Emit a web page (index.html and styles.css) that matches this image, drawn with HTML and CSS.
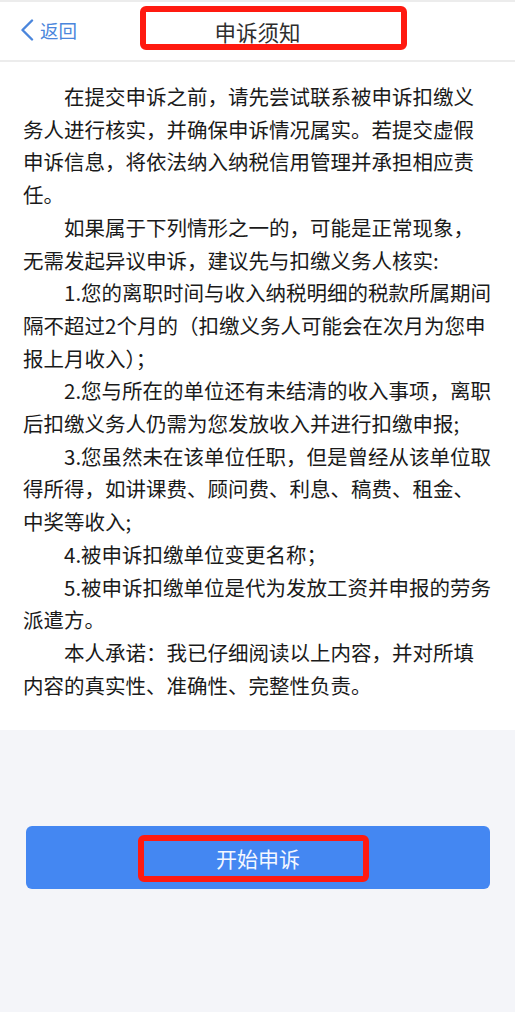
FILE: index.html
```html
<!DOCTYPE html>
<html lang="zh-CN">
<head>
<meta charset="utf-8">
<title>申诉须知</title>
<link rel="stylesheet" href="styles.css">
</head>
<body>
<div class="page">
  <header class="topbar">
    <a class="back">
      <svg class="chev" width="14" height="22" viewBox="0 0 14 22"><polyline points="12,1.5 2.5,11 12,20.5" fill="none" stroke="#4b86dc" stroke-width="2.4" stroke-linecap="round" stroke-linejoin="round"/></svg>
      <span>返回</span>
    </a>
    <h1 class="title">申诉须知</h1>
    <span class="mark mark-title"></span>
  </header>
  <main class="notice">
    <p class="para">在提交申诉之前，请先尝试联系被申诉扣缴义务人进行核实，并确保申诉情况属实。若提交虚假申诉信息，将依法纳入纳税信用管理并承担相应责任。</p>
    <p class="para">如果属于下列情形之一的，可能是正常现象，<br>无需发起异议申诉，建议先与扣缴义务人核实:</p>
    <p class="para">1.您的离职时间与收入纳税明细的税款所属期间隔不超过2个月的（扣缴义务人可能会在次月为您申报上月收入）；</p>
    <p class="para">2.您与所在的单位还有未结清的收入事项，离职后扣缴义务人仍需为您发放收入并进行扣缴申报;</p>
    <p class="para">3.您虽然未在该单位任职，但是曾经从该单位取得所得，如讲课费、顾问费、利息、稿费、租金、中奖等收入;</p>
    <p class="para">4.被申诉扣缴单位变更名称；</p>
    <p class="para">5.被申诉扣缴单位是代为发放工资并申报的劳务派遣方。</p>
    <p class="para">本人承诺：我已仔细阅读以上内容，并对所填内容的真实性、准确性、完整性负责。</p>
  </main>
  <section class="actions">
    <button class="start">开始申诉</button>
    <span class="mark mark-btn"></span>
  </section>
</div>
</body>
</html>
```
FILE: styles.css
```css
* { box-sizing: border-box; }
html, body { margin: 0; padding: 0; }
body {
  background: #f4f5f9;
  font-family: "Noto Sans CJK SC", "Noto Sans", sans-serif;
  color: #1a1a1a;
}
.page { width: 515px; min-height: 1012px; background: #f4f5f9; }
.topbar {
  position: relative;
  height: 62px;
  background: #fff;
  border-top: 2px solid #ececec;
  border-bottom: 2px solid #ececec;
  display: flex;
  align-items: center;
}
.back {
  display: flex;
  align-items: center;
  gap: 6px;
  padding-left: 20px;
  color: #4b86dc;
  font-size: 18.5px;
  line-height: 1;
  position: relative;
  top: -1px;
}
.title {
  position: absolute;
  left: 0; right: 0;
  top: 0; bottom: 0;
  margin: 0;
  display: flex;
  align-items: center;
  justify-content: center;
  font-size: 21.5px;
  font-weight: normal;
  color: #2e2e2e;
  pointer-events: none;
}
.mark {
  position: absolute;
  border: 6px solid #ff1a10;
  border-radius: 6px;
}
.mark-title { left: 140px; top: 4px; width: 267px; height: 44px; }
.notice {
  background: #fff;
  padding: 18px 22px 29px 23px;
  font-size: 20.5px;
  line-height: 32.7px;
}
.para { margin: 0; text-indent: 2em; }
.actions {
  position: relative;
  padding: 96px 25px 0 26px;
}
.start {
  display: block;
  width: 464px;
  height: 63px;
  border: 0;
  border-radius: 6px;
  background: #4487f2;
  color: #f4f7ff;
  font-family: "Noto Sans CJK SC", sans-serif;
  font-size: 21px;
}
.mark-btn { left: 138px; top: 105px; width: 231px; height: 47px; }
```
